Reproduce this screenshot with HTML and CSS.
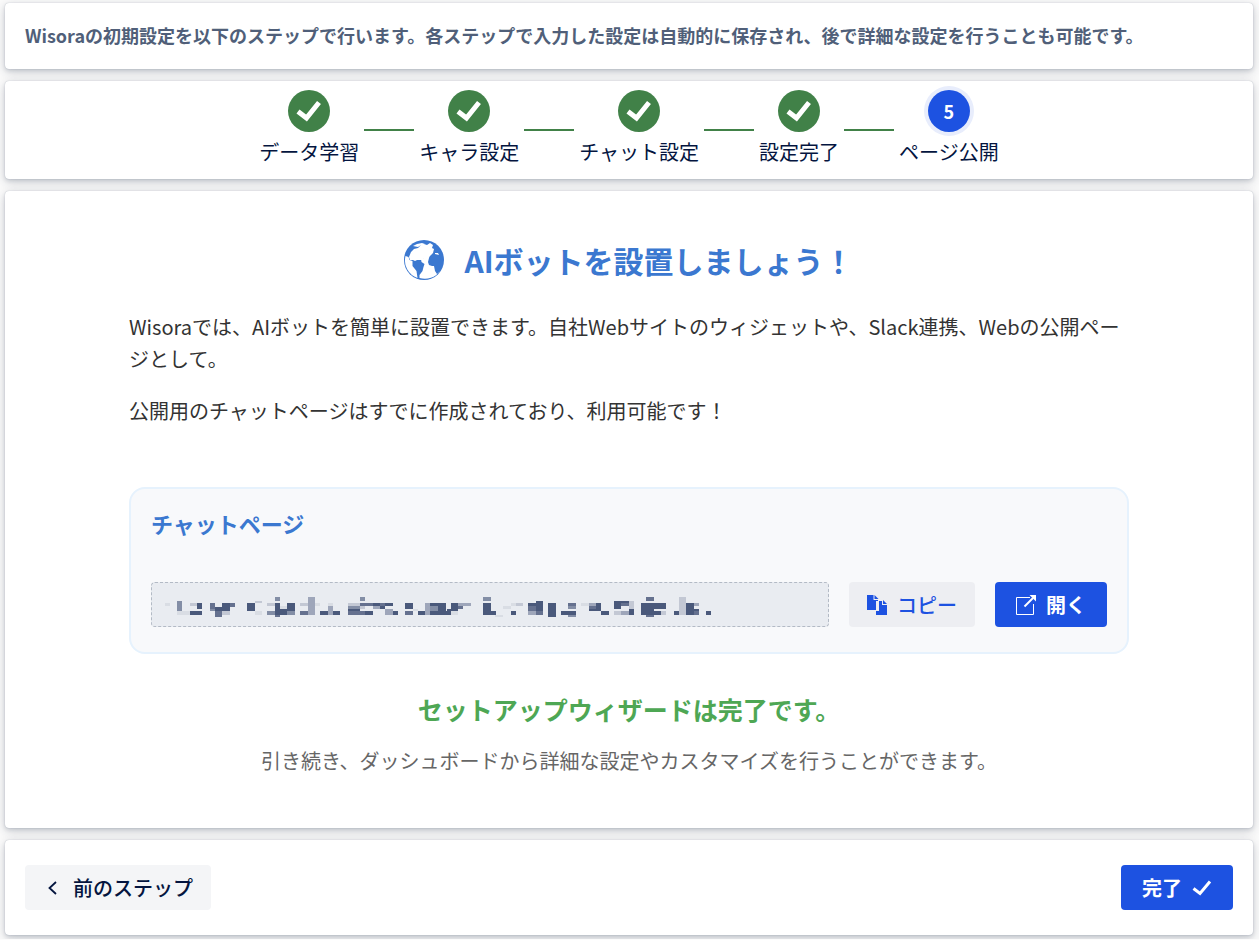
FILE: index.html
```html
<!DOCTYPE html>
<html lang="ja">

<head>
    <meta charset="UTF-8">
    <meta name="viewport" content="width=device-width, initial-scale=1.0">
    <title>Wisora 初期設定</title>
    <link rel="stylesheet" href="styles.css">
</head>

<body>
    <header class="card intro">
        <p>Wisoraの初期設定を以下のステップで行います。各ステップで入力した設定は自動的に保存され、後で詳細な設定を行うことも可能です。</p>
    </header>

    <nav class="card">
        <ol class="steps">
            <li class="step">
                <span class="step-icon done"><svg viewBox="0 0 42 42"><path d="M10 21.500l8.500 6.500L31 12.500"/></svg></span>
                <span>データ学習</span>
            </li>
            <li class="step">
                <span class="step-icon done"><svg viewBox="0 0 42 42"><path d="M10 21.500l8.500 6.500L31 12.500"/></svg></span>
                <span>キャラ設定</span>
            </li>
            <li class="step">
                <span class="step-icon done"><svg viewBox="0 0 42 42"><path d="M10 21.500l8.500 6.500L31 12.500"/></svg></span>
                <span>チャット設定</span>
            </li>
            <li class="step">
                <span class="step-icon done"><svg viewBox="0 0 42 42"><path d="M10 21.500l8.500 6.500L31 12.500"/></svg></span>
                <span>設定完了</span>
            </li>
            <li class="step" aria-current="step">
                <span class="step-icon current">5</span>
                <span>ページ公開</span>
            </li>
        </ol>
    </nav>

    <main class="card main">
        <div class="content">
            <h1>
                <svg class="globe" viewBox="0 0 40 40">
                    <circle cx="20" cy="20" r="20" fill="#3b78d0"/>
                    <g fill="#fff">
                        <path d="M9 6l4-2 5-1 3 1-4 1-3 2zM20 4l3 1 3-2 3 2-1 3 2 1-1 4-3 3-3 2-3 0-1 2-3 0-3 0-2 1-2-1-3 0-1-3 2-5 3-3 4-1 3-3 4-1z"/>
                        <path d="M1.500 16l3 1 1 3 3 1 0 5 4 5 1 7A18.500 18.500 0 0 1 1.500 16z"/>
                        <path d="M17 19l6-2 3-2-1 3-1 4 1 3 3 1 2 0 1 5 2 3 3-3A18.500 18.500 0 0 1 15.500 38l0-3 3-4 1-4 1-3-3-2z"/>
                        <path d="M31 13l3 0 1 2-4-1z"/>
                    </g>
                </svg>
                AIボットを設置しましょう！
            </h1>
            <p>Wisoraでは、AIボットを簡単に設置できます。自社Webサイトのウィジェットや、Slack連携、Webの公開ページとして。</p>
            <p>公開用のチャットページはすでに作成されており、利用可能です！</p>

            <section class="panel">
                <h2>チャットページ</h2>
                <div class="url-row">
                    <div class="url-box">
                        <svg class="mosaic" viewBox="45 51 1638 60" shape-rendering="crispEdges">
                            <path fill="#d9dde4" d="M45 69h15v9h-15zM81 93h39v12h-39zM315 93h21v12h-21zM390 78h22v9h-22zM495 69h15v9h-15zM534 69h15v9h-15zM788 87h16v6h-16zM904 93h20v12h-20zM1060 78h24v9h-24zM1084 69h14v9h-14zM1036 105h24v6h-24zM1293 69h24v9h-24z"/>
                            <path fill="#c3c8d4" d="M120 69h21v9h-21zM216 93h24v12h-24zM315 63h21v6h-21zM351 69h24v9h-24zM450 69h24v9h-24zM594 69h36v9h-36zM630 78h15v9h-15zM1098 69h21v9h-21zM1437 63h15v24h-15zM1392 93h21v12h-21zM1533 93h15v12h-15zM1587 51h21v54h-21z"/>
                            <path fill="#9ea6ba" d="M474 51h21v54h-21zM534 78h15v27h-15zM705 87h24v18h-24zM669 78h21v9h-21zM825 69h15v36h-15zM924 69h39v9h-39zM1134 93h24v12h-24zM1317 69h21v9h-21zM1413 93h24v12h-24zM1632 69h15v9h-15z"/>
                            <path fill="#838ea6" d="M81 63h15v30h-15zM180 87h15v6h-15zM375 51h15v12h-15zM351 93h24v12h-24zM411 93h24v12h-24zM630 51h15v12h-15zM594 78h36v9h-36zM840 78h24v15h-24zM999 51h24v12h-24zM1254 78h24v9h-24zM1254 105h24v6h-24z"/>
                            <path fill="#65718f" d="M180 69h15v18h-15zM195 93h21v18h-21zM240 69h15v12h-15zM375 105h15v6h-15zM450 93h24v12h-24zM594 93h51v12h-51zM645 69h24v9h-24zM690 69h15v9h-15zM630 69h15v9h-15zM765 93h24v12h-24zM924 78h15v9h-15zM1134 78h24v15h-24zM1158 93h21v12h-21zM1254 69h24v9h-24zM1317 78h21v9h-21zM1413 69h24v9h-24zM1488 51h24v12h-24zM1488 105h24v6h-24zM1632 93h15v12h-15z"/>
                            <path fill="#4a597b" d="M120 93h36v12h-36zM141 69h15v18h-15zM195 81h21v12h-21zM216 69h24v24h-24zM291 69h24v24h-24zM375 69h15v36h-15zM390 87h21v18h-21zM411 69h24v24h-24zM510 93h24v12h-24zM549 93h21v12h-21zM594 87h36v6h-36zM645 93h24v12h-24zM669 69h21v9h-21zM705 69h24v9h-24zM690 78h15v9h-15zM729 93h15v12h-15zM765 69h24v18h-24zM804 93h21v12h-21zM864 69h24v36h-24zM840 69h24v9h-24zM840 93h63v12h-63zM903 69h21v18h-21zM891 87h33v6h-33zM999 69h24v24h-24zM999 93h39v12h-39zM1083 93h15v12h-15zM1158 63h21v30h-21zM1134 69h24v9h-24zM1194 69h24v42h-24zM1233 93h45v12h-45zM1317 87h36v6h-36zM1338 69h15v24h-15zM1353 93h24v12h-24zM1392 63h21v24h-21zM1437 87h15v18h-15zM1413 63h24v6h-24zM1473 69h75v18h-75zM1473 87h39v18h-39zM1512 93h21v12h-21zM1572 93h15v12h-15zM1608 69h24v36h-24zM1632 87h15v6h-15zM1668 93h15v12h-15z"/>
                        </svg>
                    </div>
                    <button type="button" class="btn btn-copy">
                        <svg class="icon" viewBox="0 0 20 20" fill="currentColor"><path d="M0 0h6.500v5H11v1H9v9H0zM7.500 0L11.500 4h-4zM10 5h1v1h4v4h5v10H9v-4h3V6h-2zM16 5l4 4h-4z"/></svg>
                        コピー
                    </button>
                    <button type="button" class="btn btn-primary">
                        <svg class="icon" viewBox="0 0 20 20"><path fill="none" stroke="currentColor" d="M14 2.500H.5v17h17V9"/><path fill="none" stroke="currentColor" stroke-width="2" d="M8.500 11.500L17 3"/><path fill="currentColor" d="M13.500 0H20v6.500z"/></svg>
                        開く
                    </button>
                </div>
            </section>

            <div class="finish">
                <h2>セットアップウィザードは完了です。</h2>
                <p>引き続き、ダッシュボードから詳細な設定やカスタマイズを行うことができます。</p>
            </div>
        </div>
    </main>

    <footer class="card footer">
        <button type="button" class="btn btn-back">
            <svg class="icon" viewBox="0 0 20 20"><path fill="none" stroke="currentColor" stroke-width="1.800" d="M13 4L6.500 10l6.500 6"/></svg>
            前のステップ
        </button>
        <button type="button" class="btn btn-primary">
            完了
            <svg class="icon" viewBox="0 0 20 20"><path fill="none" stroke="currentColor" stroke-width="3" d="M1.500 10.500L8 15.500 18 3.500"/></svg>
        </button>
    </footer>
</body>

</html>
```

FILE: styles.css
```css
* {
    box-sizing: border-box;
}

body {
    margin: 0;
    padding: 3px 6px 4px 5px;
    display: flex;
    flex-direction: column;
    gap: 12px;
    background-color: #fbfbfb;
    color: #333;
    font-family: "Noto Sans CJK JP", sans-serif;
    font-size: 20px;
    line-height: 32px;
}

h1,
h2,
p {
    margin: 0;
}

.card {
    background: #fff;
    border-radius: 4px;
    box-shadow: 0 0 1px rgba(9, 30, 66, 0.3), 0 2px 4px rgba(9, 30, 66, 0.12), 0 3px 12px rgba(20, 30, 50, 0.2);
}

.intro {
    padding: 16px 20px 18px;
    color: #505f79;
    font-size: 18px;
    font-weight: 600;
}

.steps {
    display: flex;
    justify-content: center;
    margin: 0;
    padding: 9px 0 11px;
    list-style: none;
    color: #04153f;
}

.step {
    display: flex;
    flex-direction: column;
    align-items: center;
    gap: 4px;
    position: relative;
}

.step + .step {
    margin-left: 60px;
}

/* connector between two steps */
.step + .step::before {
    content: "";
    position: absolute;
    top: 39px;
    left: -55px;
    width: 50px;
    height: 2px;
    background: #418148;
}

.step-icon {
    display: flex;
    align-items: center;
    justify-content: center;
    width: 42px;
    height: 42px;
    border-radius: 50%;
    color: #fff;
    font-size: 18px;
    font-weight: bold;
}

.done {
    background: #418148;
}

.done svg {
    width: 42px;
    height: 42px;
    fill: none;
    stroke: #fff;
    stroke-width: 5;
}

.current {
    background: #1d52e1;
    box-shadow: 0 0 0 4px #e8edfc;
}

.main {
    padding: 45px 20px 51px;
}

.content {
    max-width: 1000px;
    margin: 0 auto;
}

.content > p {
    margin-bottom: 20px;
}

h1 {
    display: flex;
    align-items: center;
    justify-content: center;
    gap: 20px;
    margin-bottom: 27px;
    color: #3b78d0;
    font-size: 30px;
    font-weight: 600;
    line-height: 48px;
}

.globe {
    width: 40px;
    height: 40px;
}

.panel {
    margin-top: 60px;
    padding: 18px 20px 25px;
    background: #f8f9fb;
    border: 2px solid #e6f2fd;
    border-radius: 16px;
}

.panel h2 {
    margin-bottom: 43px;
    color: #3b78d0;
    font-size: 22px;
    font-weight: 600;
}

.url-row {
    display: flex;
    gap: 20px;
}

.url-box {
    flex: 1;
    display: flex;
    align-items: center;
    min-width: 0;
    padding: 4px 13px 0;
    background: #e9ecf1;
    border: 1px dashed #b3bac5;
    border-radius: 4px;
}

.mosaic {
    width: 546px;
    height: 20px;
}

.btn {
    display: flex;
    align-items: center;
    gap: 10px;
    height: 45px;
    padding: 0 18px;
    border: none;
    border-radius: 4px;
    font-family: inherit;
    font-size: 20px;
    font-weight: 500;
    cursor: pointer;
}

.icon {
    width: 20px;
    height: 20px;
}

.btn-copy {
    background: #edeef2;
    color: #1d52e1;
}

.btn-primary {
    padding: 0 21px;
    background: #1d52e1;
    color: #fff;
    font-weight: bold;
}

.btn-back {
    background: #f4f5f7;
    color: #04153f;
}

.finish {
    margin-top: 39px;
    text-align: center;
}

.finish h2 {
    margin-bottom: 20px;
    color: #4ea754;
    font-size: 25px;
    font-weight: 600;
}

.finish p {
    color: #666;
}

.footer {
    display: flex;
    justify-content: space-between;
    padding: 25px 20px;
}
```
